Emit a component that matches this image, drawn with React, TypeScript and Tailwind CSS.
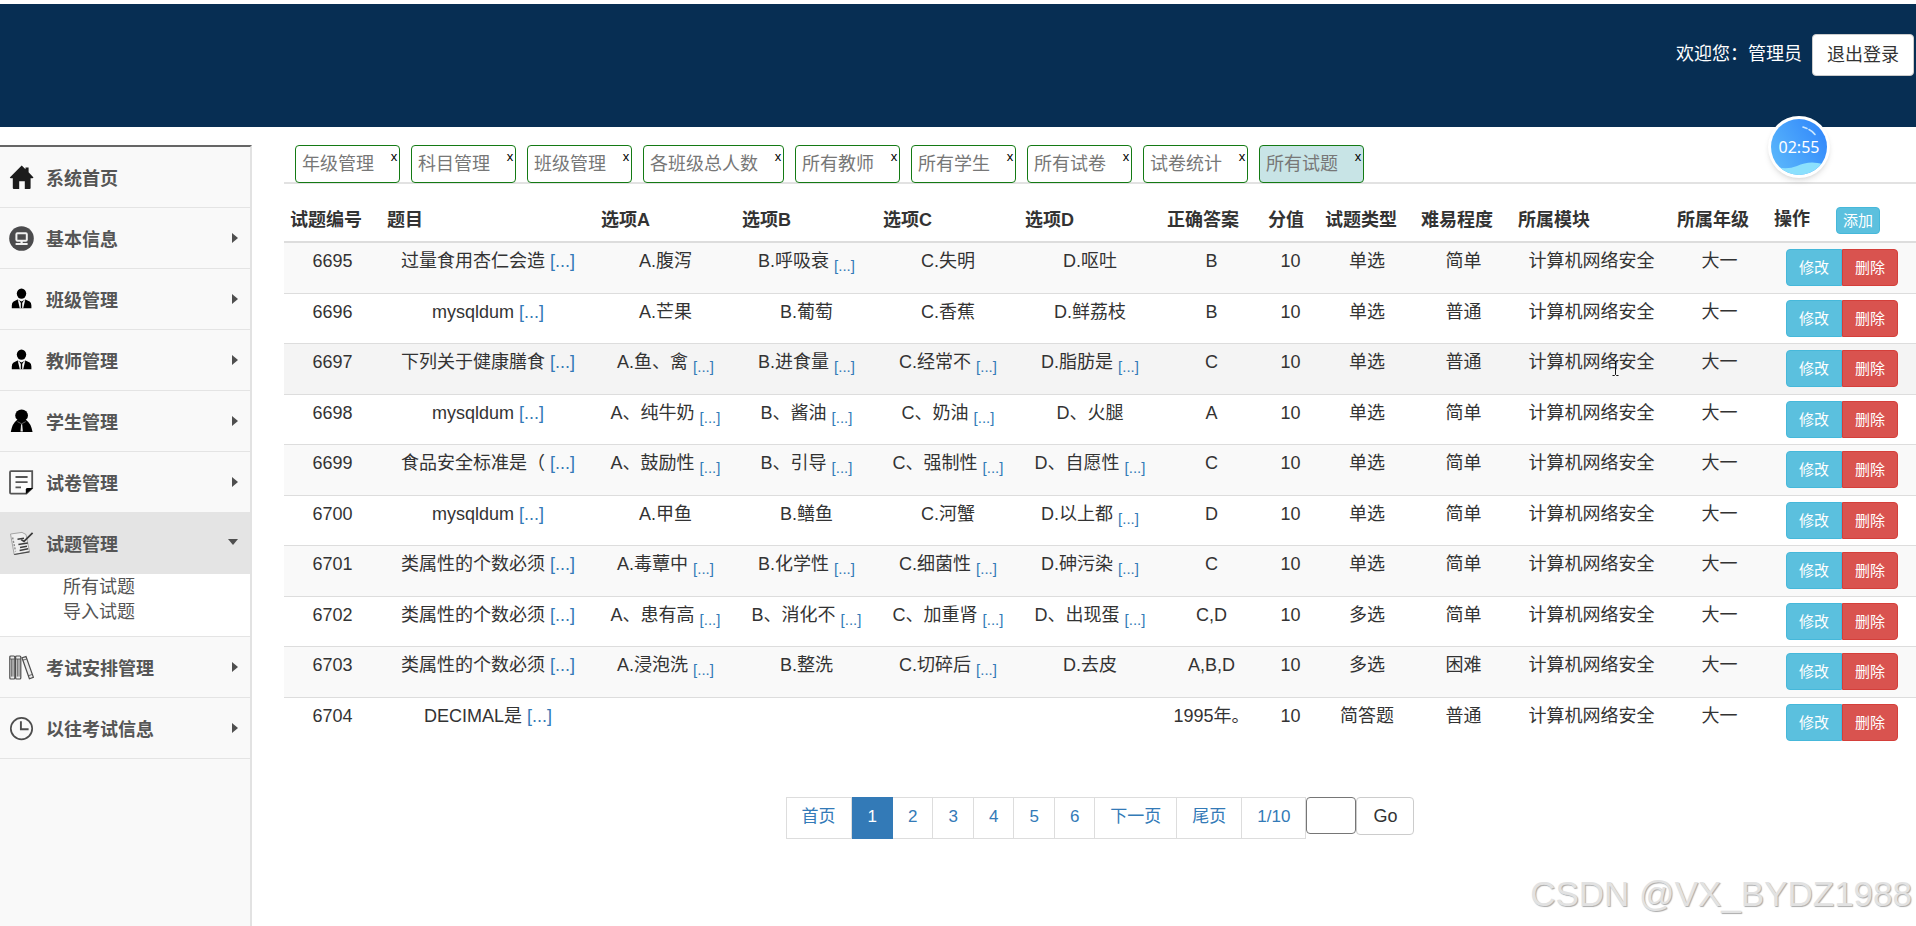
import type { ReactNode } from 'react'

const menuItems: { label: string; icon: ReactNode; children?: string[]; leaf?: boolean }[] = [
  { label: '系统首页', icon: <HomeIcon />, leaf: true },
  { label: '基本信息', icon: <MonitorIcon /> },
  { label: '班级管理', icon: <ManagerIcon /> },
  { label: '教师管理', icon: <ManagerIcon /> },
  { label: '学生管理', icon: <StudentIcon /> },
  { label: '试卷管理', icon: <PaperIcon /> },
  { label: '试题管理', icon: <QuestionIcon />, children: ['所有试题', '导入试题'] },
  { label: '考试安排管理', icon: <BooksIcon /> },
  { label: '以往考试信息', icon: <ClockIcon /> },
]

const tabs = [
  '年级管理',
  '科目管理',
  '班级管理',
  '各班级总人数',
  '所有教师',
  '所有学生',
  '所有试卷',
  '试卷统计',
  '所有试题',
]

const columns = [
  '试题编号',
  '题目',
  '选项A',
  '选项B',
  '选项C',
  '选项D',
  '正确答案',
  '分值',
  '试题类型',
  '难易程度',
  '所属模块',
  '所属年级',
]

// a trailing "+" on an option means that the text is cut and gets a [...] link
const questions = [
  { id: 6695, title: '过量食用杏仁会造', options: ['A.腹泻', 'B.呼吸衰+', 'C.失明', 'D.呕吐'], answer: 'B', type: '单选', level: '简单' },
  { id: 6696, title: 'mysqldum', options: ['A.芒果', 'B.葡萄', 'C.香蕉', 'D.鲜荔枝'], answer: 'B', type: '单选', level: '普通' },
  { id: 6697, title: '下列关于健康膳食', options: ['A.鱼、禽+', 'B.进食量+', 'C.经常不+', 'D.脂肪是+'], answer: 'C', type: '单选', level: '普通' },
  { id: 6698, title: 'mysqldum', options: ['A、纯牛奶+', 'B、酱油+', 'C、奶油+', 'D、火腿'], answer: 'A', type: '单选', level: '简单' },
  { id: 6699, title: '食品安全标准是（', options: ['A、鼓励性+', 'B、引导+', 'C、强制性+', 'D、自愿性+'], answer: 'C', type: '单选', level: '简单' },
  { id: 6700, title: 'mysqldum', options: ['A.甲鱼', 'B.鳝鱼', 'C.河蟹', 'D.以上都+'], answer: 'D', type: '单选', level: '简单' },
  { id: 6701, title: '类属性的个数必须', options: ['A.毒蕈中+', 'B.化学性+', 'C.细菌性+', 'D.砷污染+'], answer: 'C', type: '单选', level: '简单' },
  { id: 6702, title: '类属性的个数必须', options: ['A、患有高+', 'B、消化不+', 'C、加重肾+', 'D、出现蛋+'], answer: 'C,D', type: '多选', level: '简单' },
  { id: 6703, title: '类属性的个数必须', options: ['A.浸泡洗+', 'B.整洗', 'C.切碎后+', 'D.去皮'], answer: 'A,B,D', type: '多选', level: '困难' },
  { id: 6704, title: 'DECIMAL是', options: ['', '', '', ''], answer: '1995年。', type: '简答题', level: '普通' },
]

const pages = ['首页', '1', '2', '3', '4', '5', '6', '下一页', '尾页', '1/10']

function HomeIcon() {
  return (
    <svg viewBox="0 0 25 25" className="size-[25px]" fill="#1c1c1c">
      <path d="M12.7 0.5 L16.5 4.2 V2.6 H19.6 V7.2 L24.5 12.4 L23.6 13.2 H21.6 V23 Q21.6 24 20.6 24 H15.8 V16.2 H10.2 V24 H4.8 Q3.8 24 3.8 23 V13.2 H1.6 L0.8 12.4 Z" />
    </svg>
  )
}

function MonitorIcon() {
  return (
    <svg viewBox="0 0 25 25" className="size-[25px]">
      <circle cx="12.5" cy="12.5" r="12.3" fill="#4b4b4d" />
      <rect x="7.4" y="7.2" width="10.4" height="7.6" rx="1" fill="none" stroke="#f1f1f1" strokeWidth="2" />
      <path d="M12.6 15 V17.4 M6.6 18 H18.6" fill="none" stroke="#f1f1f1" strokeWidth="2.2" />
    </svg>
  )
}

function ManagerIcon() {
  return (
    <svg viewBox="0 0 25 25" className="size-[25px]">
      <ellipse cx="12.5" cy="6.6" rx="4.7" ry="5.2" fill="#000" />
      <path d="M8.6 12.4 L12.5 14.6 L16.4 12.4 L20.6 14.6 Q22.4 15.6 22.4 18.6 V21.2 H2.8 V18.6 Q2.8 15.6 4.6 14.6 Z" fill="#000" />
      <path d="M8.8 13 L10.8 21.2 H11.8 L11.8 16 L10.2 13.6 Z M16.2 13 L14.2 21.2 H13.2 L13.2 16 L14.8 13.6 Z" fill="#f9f9f9" />
    </svg>
  )
}

function StudentIcon() {
  return (
    <svg viewBox="0 0 25 25" className="size-[25px]">
      <ellipse cx="12.6" cy="6.4" rx="6.4" ry="5.9" fill="#000" />
      <path d="M8 11 H17.2 Q21.8 14 23.6 23 H1.8 Q3.4 14 8 11 Z" fill="#000" />
      <path d="M8.4 12.6 L12.6 14.8 L16.8 12.6" fill="none" stroke="#888" strokeWidth="0.7" />
      <path d="M12.1 15.2 H13.2 L13.9 22.4 H11.5 Z" fill="#e4e4e4" />
    </svg>
  )
}

function PaperIcon() {
  return (
    <svg viewBox="0 0 25 25" className="size-[25px]">
      <path d="M2 1.2 H23.2 V18 L17.4 23.6 H2 Q1 23.6 1 22.6 V2.2 Q1 1.2 2 1.2 Z" fill="#fbfbfb" stroke="#555" strokeWidth="1.8" />
      <path d="M6.5 7 H18.6 M6.5 12.2 H18.6 M6.5 17.4 H12" stroke="#555" strokeWidth="1.8" />
      <path d="M16.8 24 V19.4 Q17 18 18.4 18 H24 Z" fill="#000" />
    </svg>
  )
}

function QuestionIcon() {
  return (
    <svg viewBox="0 0 25 25" className="size-[25px]" fill="none">
      <path d="M1.5 3 L13 1.4 L17 3.5 L20.5 20.5 L5.2 23.5 Z" fill="#efefef" stroke="#a5a5a5" strokeWidth="1" />
      <path d="M5.2 23.5 L20.5 20.8" stroke="#4a4a4a" strokeWidth="1.2" />
      <path d="M3.6 6.5 L6.6 20.5" stroke="#8b8b8b" strokeWidth="1.4" strokeDasharray="2 1.4" />
      <path d="M8.5 8.2 L15 7.2 M9.4 13.6 L18.8 12 M11 16.4 L18 15.2 M10.6 19.4 L19.2 17.8" stroke="#3d3d3d" strokeWidth="1.5" />
      <path d="M23.6 1.8 L15 10.4 L12.2 8.6" stroke="#3a3a3a" strokeWidth="1.7" />
    </svg>
  )
}

function BooksIcon() {
  return (
    <svg viewBox="0 0 25 25" className="size-[25px]" fill="#ececec" stroke="#4d4d4d" strokeWidth="1.2">
      <rect x="0.8" y="1" width="5" height="23" rx="1" />
      <rect x="6.6" y="1" width="5.2" height="23" rx="1" />
      <path d="M13 2.8 L17 1.6 L24.4 22.4 L20.4 23.8 Z" />
      <path d="M2.6 4 V21.6 M4 4 V21.6 M8.4 4 V21.6 M10 4 V21.6 M0.8 4 H5.8 M6.6 4 H11.8 M13.8 5.2 L17.8 4 M19.2 20.8 L23.4 19.4" strokeWidth="0.8" />
    </svg>
  )
}

function ClockIcon() {
  return (
    <svg viewBox="0 0 25 25" className="size-[25px]" fill="none" stroke="#4d4d4d">
      <circle cx="12.5" cy="12.6" r="10.7" strokeWidth="1.7" />
      <path d="M11.9 5.2 V13.2 H19.6" strokeWidth="1.9" />
    </svg>
  )
}

function Sidebar() {
  return (
    <nav className="w-[252px] shrink-0 border-t-2 border-r-2 border-t-[#666] border-r-[#e2e2e2] bg-[#f9f9f9]">
      <ul>
        {menuItems.map((item) => (
          <li key={item.label} className="border-b border-[#e4e4e4]">
            <a
              href="#"
              className={
                item.children
                  ? 'flex h-[61px] items-center gap-3 bg-[#e4e4e4] pr-3 pl-[9px]'
                  : 'flex h-[60px] items-center gap-3 pr-3 pl-[9px]'
              }
            >
              {item.icon}
              <span className="flex-1 pt-1 font-bold">{item.label}</span>
              {item.children && (
                <svg viewBox="0 0 10 6" className="mb-1 h-1.5 w-2.5" fill="#4f4f4f">
                  <path d="M0 0 H10 L5 6 Z" />
                </svg>
              )}
              {!item.children && !item.leaf && (
                <svg viewBox="0 0 6 10" className="h-2.5 w-1.5" fill="#4f4f4f">
                  <path d="M0 0 L6 5 L0 10 Z" />
                </svg>
              )}
            </a>
            {item.children && (
              <ul className="bg-white pt-px pb-[11px] pl-[63px]">
                {item.children.map((child) => (
                  <li key={child} className="h-[25px]">
                    <a href="#">{child}</a>
                  </li>
                ))}
              </ul>
            )}
          </li>
        ))}
      </ul>
    </nav>
  )
}

function Tabs() {
  return (
    <ul className="flex h-[39px] gap-[11px] border-b-2 border-[#e2e2e2] pl-[11px]">
      {tabs.map((tab) => (
        <li
          key={tab}
          className={
            tab === '所有试题'
              ? 'flex h-[38px] rounded border border-[#147a14] bg-[#c8e4e6] pl-1.5'
              : 'flex h-[38px] rounded border border-[#147a14] bg-white pl-1.5'
          }
        >
          <a href="#" className="pt-1.5 pr-[15px] text-[#777]">
            {tab}
          </a>
          <button type="button" aria-label={'关闭' + tab} className="h-[22px] w-2.5 text-[13px] leading-[22px] text-black">
            x
          </button>
        </li>
      ))}
    </ul>
  )
}

function OptionCell({ text }: { text: string }) {
  const cut = text.endsWith('+')
  return (
    <td className="py-1.5">
      {cut ? text.slice(0, -1) : text}
      {cut && (
        <>
          {' '}
          <a href="#" className="relative top-1 text-[15px] leading-none text-[#337ab7]">
            [...]
          </a>
        </>
      )}
    </td>
  )
}

function QuestionTable() {
  return (
    <table className="mt-4 w-full table-fixed text-center whitespace-nowrap text-[#333]">
      <colgroup>
        <col className="w-[97px]" />
        <col className="w-[214px]" />
        <col className="w-[141px]" />
        <col className="w-[141px]" />
        <col className="w-[142px]" />
        <col className="w-[142px]" />
        <col className="w-[101px]" />
        <col className="w-[57px]" />
        <col className="w-[96px]" />
        <col className="w-[97px]" />
        <col className="w-[159px]" />
        <col className="w-[97px]" />
        <col className="w-[148px]" />
      </colgroup>
      <thead>
        <tr className="h-[42px] border-b-2 border-[#ddd] text-left">
          {columns.map((column) => (
            <th key={column} className="pl-1.5">
              {column}
            </th>
          ))}
          <th className="pl-1.5">
            操作
            <button type="button" className="ml-[26px] h-[27px] rounded border border-[#46b8da] bg-[#5bc0de] px-1.5 align-middle text-[15px] font-normal text-white">
              添加
            </button>
          </th>
        </tr>
      </thead>
      <tbody>
        {questions.map((q) => (
          <tr
            key={q.id}
            className="h-[51px] border-b border-[#ddd] align-top last:border-b-0 odd:bg-[#f9f9f9] even:h-[50px] nth-3:bg-[#f4f4f4]"
          >
            <td className="py-1.5">{q.id}</td>
            <td className="py-1.5">
              {q.title}{' '}
              <a href="#" className="text-[#337ab7]">
                [...]
              </a>
            </td>
            {q.options.map((option, i) => (
              <OptionCell key={i} text={option} />
            ))}
            <td className="py-1.5">{q.answer}</td>
            <td className="py-1.5">10</td>
            <td className="py-1.5">{q.type}</td>
            <td className="py-1.5">{q.level}</td>
            <td className="relative py-1.5">
              计算机网络安全
              {q.id === 6697 && <TextCursor />}
            </td>
            <td className="py-1.5">大一</td>
            <td className="pt-1.5">
              <div className="flex justify-center text-[15px] text-white">
                <button type="button" className="h-[37px] w-14 rounded-l border border-[#46b8da] bg-[#5bc0de]">
                  修改
                </button>
                <button type="button" className="h-[37px] w-14 rounded-r border border-[#d43f3a] bg-[#d9534f]">
                  删除
                </button>
              </div>
            </td>
          </tr>
        ))}
      </tbody>
    </table>
  )
}

function TextCursor() {
  return (
    <svg viewBox="0 0 7 16" className="absolute top-4 left-[100px] h-4 w-[7px]" fill="none" stroke="#111">
      <path d="M0.5 0.5 H2.5 L3.5 1.5 L4.5 0.5 H6.5 M3.5 1.5 V14.5 M0.5 15.5 H2.5 L3.5 14.5 L4.5 15.5 H6.5" />
    </svg>
  )
}

function Pagination() {
  return (
    <div className="mt-[50px] flex items-start justify-center">
      <ul className="flex border-l border-[#ddd]">
        {pages.map((page) => (
          <li key={page}>
            <a
              href="#"
              className={
                page === '1'
                  ? 'block h-[42px] border border-[#337ab7] bg-[#337ab7] px-[15px] pt-1.5 text-[17px] text-white'
                  : 'block h-[42px] border border-l-0 border-[#ddd] bg-white px-[15px] pt-1.5 text-[17px] text-[#337ab7]'
              }
            >
              {page}
            </a>
          </li>
        ))}
      </ul>
      <input type="text" aria-label="页码" className="h-[37px] w-[50px] rounded border border-[#767676] bg-white px-1" />
      <button type="button" className="h-[38px] rounded border border-[#ccc] bg-white px-4 text-[#333]">
        Go
      </button>
    </div>
  )
}

// floating screen-recording timer
function TimerBall() {
  return (
    <div className="absolute top-[116px] right-[86px] flex size-[62px] items-center justify-center rounded-full bg-white shadow-md">
      <svg viewBox="0 0 56 56" className="absolute size-14">
        <defs>
          <linearGradient id="ball" x1="0" y1="0.8" x2="1" y2="0.2">
            <stop offset="0" stopColor="#5bb8fb" />
            <stop offset="1" stopColor="#3187fb" />
          </linearGradient>
          <clipPath id="ball-clip">
            <circle cx="28" cy="28" r="28" />
          </clipPath>
        </defs>
        <circle cx="28" cy="28" r="28" fill="url(#ball)" />
        <g clipPath="url(#ball-clip)">
          <path d="M6 48 Q16 51 26 47 Q38 41 52 45 L52 56 H4 Z" fill="#8be0fd" />
          <path d="M32 8 L36 9.5 M38 10.5 Q42 12.5 44 15.5" fill="none" stroke="#c9e6ff" strokeWidth="1.6" strokeLinecap="round" />
        </g>
      </svg>
      <span className="relative font-['Noto_Sans'] text-base text-white">02:55</span>
    </div>
  )
}

export default function App() {
  return (
    <div className="relative flex min-h-screen flex-col bg-white font-['Liberation_Sans','Noto_Sans_CJK_SC',sans-serif] text-[18px] leading-[25px] text-[#555]">
      <header className="mt-1 flex h-[123px] items-start justify-end gap-2.5 bg-[#072e53] pt-[30px] pr-0.5">
        <span className="pt-2 text-white">欢迎您：管理员</span>
        <button type="button" className="h-[42px] rounded border border-[#ccc] bg-white px-3.5 text-[#333]">
          退出登录
        </button>
      </header>

      <div className="flex flex-1 gap-8 pt-[18px]">
        <Sidebar />
        <main className="min-w-0 flex-1">
          <Tabs />
          <QuestionTable />
          <Pagination />
        </main>
      </div>

      <TimerBall />
      <div className="absolute right-1 bottom-3 text-[35px] leading-10 text-[#e2e2e2] [text-shadow:1px_1px_1px_#aaa]">
        CSDN @VX_BYDZ1988
      </div>
    </div>
  )
}
